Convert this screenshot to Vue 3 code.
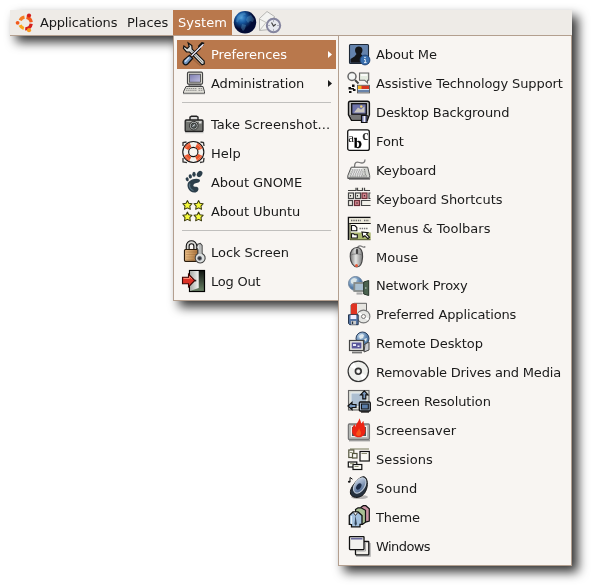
<script setup>
const icons = {
  preferences: `
    <path d="M4.5 22.8l6-6 8 7" stroke="#000" stroke-opacity=".15" stroke-width="1.5" fill="none"/>
    <path d="M6.2.9l3.6 2.6.3 3.6 12 11.8.2 3-2.2 1L7.6 10 4.500 9.800 1.400 6.300 1.900 4l3.300 2.500 2-1.900z" fill="#d9dcda" stroke="#111" stroke-width="1.200"/>
    <path d="M9 8.500l11.500 12" stroke="#8b908e" stroke-width="1"/>
    <path d="M22 2.200l-1.800-.5-2.500 2.500-.3 2L9.500 14" fill="none" stroke="#111" stroke-width="3"/>
    <path d="M21.500 2.200l-3.200 3L9.500 14" fill="none" stroke="#eef" stroke-width="1.300"/>
    <path d="M7.500 13.200l3.200 3-4.800 5.500c-3 2.600-6.400-.6-4-3.700z" fill="#7193bd" stroke="#111" stroke-width="1.200"/>
    <path d="M7 15.300l-4 4.300" stroke="#c8daef" stroke-width="1.600"/>`,
  administration: `
    <rect x="5.500" y="1.200" width="15" height="12" rx="1.200" fill="#e6e5dc" stroke="#444" stroke-width="1.200"/>
    <rect x="7.500" y="3.200" width="11" height="8" fill="url(#g-violet)" stroke="#444" stroke-width=".8"/>
    <path d="M7 13.500h12v2H7z" fill="#999" stroke="#444" stroke-width=".7"/>
    <path d="M4 15.500h17l1.500 5.200v1.600h-21v-1.600z" fill="#e0dfd8" stroke="#444" stroke-width="1"/>
    <path d="M4.500 17.500h10M4 19.300h11M16.500 17.500h4M16.500 19.300h4.500" stroke="#777" stroke-width=".8" stroke-dasharray="1.500 .6"/>
    <path d="M1 22.700h22" stroke="#888" stroke-width="1"/>`,
  camera: `
    <path d="M8 8V5.200l1.500-1h5l1.500 1V8" fill="#ddd" stroke="#222" stroke-width="1.400"/>
    <rect x="3.200" y="8" width="17.800" height="11.500" rx="1" fill="#737571" stroke="#222" stroke-width="1.300"/>
    <path d="M4.500 9.400h15.300" stroke="#b9bab6" stroke-width="1"/>
    <rect x="17" y="9.500" width="2.500" height="2" fill="#ddd"/>
    <circle cx="11.800" cy="13.700" r="4.300" fill="#b4bab8" stroke="#333"/>
    <circle cx="11.800" cy="13.700" r="2.600" fill="#59625f" stroke="#222" stroke-width=".8"/>
    <path d="M10.500 14.500l2.500-2" stroke="#dde"/>
    <path d="M3 20.700h18.500" stroke="#bbb"/>`,
  help: `
    <path d="M1 5V1.500L4.500 1M18.500 1l3 .5.500 3.500M1 17v4l4 .7M18 21.500l3.500-.7.500-4" fill="none" stroke="#333" stroke-width="1.300"/>
    <circle cx="11.300" cy="11" r="7.600" fill="none" stroke="#111" stroke-width="7"/>
    <circle cx="11.300" cy="11" r="7.600" fill="none" stroke="#f2f2ee" stroke-width="4.800"/>
    <circle cx="11.300" cy="11" r="7.600" fill="none" stroke="#e8552c" stroke-width="4.800" stroke-dasharray="5.969 5.969" stroke-dashoffset="-2.984"/>
    <circle cx="11.300" cy="11" r="8.600" fill="none" stroke="#fff" stroke-opacity=".3" stroke-width="1"/>`,
  gnome: `
    <g fill="#2c3f4b">
      <ellipse cx="5.200" cy="9.300" rx="1.500" ry="2" transform="rotate(-20 5.200 9.300)"/>
      <ellipse cx="8.300" cy="6.400" rx="1.600" ry="2.200" transform="rotate(-10 8.300 6.400)"/>
      <ellipse cx="12" cy="4.300" rx="1.700" ry="2.500"/>
      <ellipse cx="17.600" cy="4" rx="2.500" ry="3.300" transform="rotate(35 17.600 4)"/>
      <path d="M17.500 9.400c-2.600-1.600-8.500-.5-11 2.600-2.800 4 .6 10.600 5.800 10.600 3.600 0 4.800-3 3.800-4.800-.9-1.500-2.900-.6-4.100-1.300-1.400-.9-.3-3 1.600-3.300 2.700-.4 5.500-1.500 3.900-3.800z"/>
    </g>
    <path d="M8 13.500c-1.500 2.500.5 6.500 3.500 7" fill="none" stroke="#587383" stroke-width="1.200"/>`,
  ubuntuStars: [[5.4, 5.900], [16.600, 5.900], [5.400, 17.400], [16.600, 17.400]].map(([x, y]) =>
    `<path transform="translate(${x} ${y}) scale(.92)" d="M0-4.700l1.500 2.900 3.500.5L2.600 1.300l.6 3.400L0 3.200l-3.200 1.500.6-3.400L-5-1.300l3.500-.5z" fill="#f5fa3c" stroke="#3a3a10" stroke-width="1.100" stroke-linejoin="round"/>`).join(''),
  lock: `
    <path d="M5.700 10V6c0-5 7.600-5 7.600 0v4" fill="none" stroke="#111" stroke-width="4"/>
    <path d="M5.700 10V6c0-5 7.600-5 7.600 0v4" fill="none" stroke="#d8d8d4" stroke-width="1.800"/>
    <rect x="2.500" y="9.500" width="13.500" height="11.800" rx="1" fill="url(#g-brass)" stroke="#2a1c0c" stroke-width="1.200"/>
    <path d="M4 12h11M4 14.500h10M4 17h8M4 19.300h8" stroke="#7c4f1e" stroke-opacity=".35" stroke-width=".8"/>
    <path d="M16 13.500V10l-1.500-2.800 1.300-3 2.500-.8 1.800 2v8a5 5 0 1 1-4.100.1z" fill="#dce0df" stroke="#444" stroke-width="1.100"/>
    <path d="M18 5v9" stroke="#888" stroke-width=".8"/>
    <circle cx="17.600" cy="18.300" r="2" fill="#303638" stroke="#778" stroke-width=".8"/>`,
  logout: `
    <rect x="7.500" y="1.500" width="15" height="21" fill="url(#g-night)" stroke="#000" stroke-width="1.200"/>
    <path d="M8 2h8.700v17L8 22z" fill="url(#g-door)"/>
    <path d="M13.500 10.800v1.600" stroke="#222" stroke-width="1.500"/>
    <path d="M.5 8.300h6V5l6.300 6.500L6.500 18v-3.200h-6z" fill="#dc3226" stroke="#3d0705" stroke-width="1.100"/>
    <path d="M1.500 9.500h6v-2l2.500 2.800" stroke="#ff8a73" fill="none"/>`,
  aboutMe: `
    <rect x="2.500" y="2.500" width="19" height="19" rx="1" fill="#6483ad" stroke="#1d2836" stroke-width="1.100"/>
    <path d="M3.500 20.700V17l4-2.500 2-2.500c-2.500-3-1.700-7.500 2.300-7.500s4.800 4.500 2.200 7.500l2 2.500 4.500 2.500v3.700z" fill="#141517"/>
    <circle cx="18" cy="18" r="4.900" fill="#3a6fae" stroke="#1d4070" stroke-width=".9"/>
    <path d="M17 17.500h1.300v3M17 20.600h2.600" stroke="#dce8f4" stroke-width="1" fill="none"/><circle cx="18" cy="15.500" r=".8" fill="#dce8f4"/>`,
  assistive: `
    <path d="M8 9l3.500 3.500" stroke="#444" stroke-width="2"/>
    <circle cx="5" cy="5.500" r="4" fill="#f4f6f4" stroke="#666" stroke-width="1.500"/>
    <path d="M12.500 2h9.200v7.200h-1.200V12l-2.800-2.800h-5.200V2z" fill="#e4ece0" stroke="#666" stroke-width="1.100"/>
    <path d="M14 4h6" stroke="#fff" stroke-width="1.600"/>
    <path d="M5 13.500h2.500V16H5zM1.500 16H4v2.500H1.500zM6 18h2.500v2H6zM2 20h2.500v2H2zM4 17h3v1.500H4z" fill="#111"/>
    <rect x="10.500" y="14.300" width="12" height="7.600" fill="#dce3ec" stroke="#555" stroke-width=".9"/>
    <path d="M14 14.800h8v3.200h-8z" fill="#d93620"/><path d="M11 14.800h3.500v3.200H11z" fill="#f0b023"/>
    <path d="M11 20h11" stroke="#2b4f86" stroke-width="1.300"/>`,
  background: `
    <path d="M3.200 1.200h17.200c1.200 0 2 .8 2 2v11.500l-2 5.500H4.500l-3-5.500V3.200c0-1.200.7-2 1.700-2z" fill="#bbb" stroke="#111" stroke-width="1.400"/>
    <path d="M2.500 15h19l-1.700 4.300H5z" fill="#777"/>
    <rect x="4.700" y="3.700" width="14.600" height="10.500" fill="#6e73aa" stroke="#111" stroke-width="1.300"/>
    <path d="M7 12.500l4-5 3 2 3.500-3v6z" fill="#c9c5bd"/><circle cx="14.300" cy="6.500" r="1.200" fill="#eed26f"/>
    <path d="M14.500 15.500h5.500v7h-5.500z" fill="#8085b5" stroke="#111" stroke-width="1.200"/><path d="M17.300 16v6" stroke="#eee" stroke-width="1.500"/>`,
  font: `
    <rect x=".7" y=".8" width="21.600" height="20.600" rx="2" fill="#fff" stroke="#111" stroke-width="1.300"/>
    <text x="1.200" y="12.500" font-family="Liberation Serif, serif" font-size="13" fill="#111">a</text>
    <text x="7.100" y="19" font-family="Liberation Serif, serif" font-weight="bold" font-size="14" fill="#000" stroke="#000" stroke-width=".4">b</text>
    <text x="15.200" y="10.500" font-family="Liberation Serif, serif" font-weight="bold" font-size="14" fill="#333">c</text>`,
  keyboard: `
    <path d="M7.500 9c0-5 2-5.500 5-4.500 4 1.500 5.500-.5 5.500-3" fill="none" stroke="#777" stroke-width="1.300"/>
    <path d="M4.200 9.200h16.500l2 8.500v2.800H.8v-2.800z" fill="#d4d6d1" stroke="#555" stroke-width="1"/>
    <path d="M5 11h10.500M4.500 13h11M4 15h12M3.300 17h12" stroke="#fff" stroke-width="1.400"/>
    <path d="M5 12h11M4.300 14h12M3.500 16h13M3 18h17M17.500 11l1 6.500" stroke="#666" stroke-width=".9" stroke-dasharray="1.500 .7"/>
    <path d="M1 19.500h22M2 21.400h21" stroke="#888" stroke-width="1"/>`,
  shortcuts: `
    <g fill="#f0efe8" stroke="#444" stroke-width="1.200">
      <path d="M1 3.500h8V.7M10.500.7v2.800h5V.7M17.500.7v2.800h5.500"/>
      <rect x="1.500" y="6" width="5" height="5.500"/><rect x="8.500" y="6" width="5" height="5.500"/>
      <rect x="15" y="6" width="5" height="5.500" fill="#d5868f" stroke="#6c2f38"/><path d="M23.500 6h-1.500v5.500h1.500"/>
      <rect x="1.500" y="13.500" width="4" height="5"/><rect x="7.500" y="13.500" width="5" height="5" fill="#d5868f" stroke="#6c2f38"/>
      <path d="M23.500 13.500h-9v5h9"/>
    </g>
    <path d="M10.500 8v1.500M3.500 8v1.500M17.500 8v1.500M10 15.200v1.500" stroke="#333" stroke-width="1.200"/>`,
  menus: `
    <path d="M1.500 24V1.500h22" fill="none" stroke="#111" stroke-width="1.500"/>
    <path d="M2.200 2.200h21.500v5H2.200z" fill="#eceadb"/><path d="M4 4.500h10M17 4.500h5" stroke="#666" stroke-width="1.500" stroke-dasharray="1.400 .9"/>
    <path d="M2.200 7.500h21.500" stroke="#111"/>
    <path d="M3 8h20.700v8.500H3z" fill="#fbfbf5"/><path d="M3 16.500h20.700v7H3z" fill="#a9b66d"/>
    <path d="M4.500 9.500h3.300l2 2v3.300H4.500zM4.500 22v-4.300h2l1 1h2.800V22z" fill="#fff" stroke="#111" stroke-width="1.100"/>
    <path d="M12.500 12.500h8" stroke="#777" stroke-width="1.600" stroke-dasharray="1.400 .8"/>
    <path d="M15 16l6 .7-1.500 1.500 3 3-1.600 1.500-3-3L16 21z" fill="#fff" stroke="#111" stroke-width="1.100"/>
    <path d="M3 8v15.700h20.500" fill="none" stroke="#4b5326"/>`,
  mouse: `
    <path d="M10.500 3c0-2 2.500-2.500 4-1.700s2.500 1.600 3.800.2" fill="none" stroke="#777" stroke-width="1.200"/>
    <path d="M10 2.500c4 0 6 4 5.600 9.500-.4 6-2.600 10-5.600 10-3.500 0-6.700-4.500-6.800-10.500C3.100 6 6 2.500 10 2.500z" fill="url(#g-mouse)" stroke="#444" stroke-width="1.100"/>
    <path d="M4 10c3-1.500 8-1.500 11 0M10 3v6" fill="none" stroke="#777" stroke-width=".8"/><rect x="8.800" y="4" width="2.400" height="5" rx="1" fill="#444"/>
    <circle cx="9.500" cy="20.500" r="1.500" fill="#e65a3a"/>`,
  network: `
    <circle cx="8.500" cy="9.500" r="7" fill="url(#g-sky)" stroke="#6c8199" stroke-width=".9"/>
    <path d="M4 6l3-2 3 1-1 3-3 2-2-1zM10 9l4-1v4z" fill="#dbe6e8"/>
    <rect x="7.300" y="9" width="10" height="8" fill="#a8bfd0" stroke="#858b89" stroke-width="1.800"/>
    <path d="M9.500 19.500h6" stroke="#aaa" stroke-width="2.200"/>
    <path d="M16.700 8l5-1.500v15l-5-1.500z" fill="#4c6450" stroke="#26362a"/><path d="M18 14h1.500" stroke="#cdd"/>`,
  preferred: `
    <path d="M4 3l3-1.700h12.500V17H4z" fill="#e6e5e0" stroke="#666"/><path d="M4 3l1-1.500h5V13H4z" fill="#df3423"/>
    <circle cx="16.500" cy="14.500" r="6.400" fill="#e5e6e3" stroke="#777" stroke-width="1.100"/>
    <path d="M16.500 14.500l-5-3.500M16.500 14.500l5 3" stroke="#fff" stroke-width="2"/>
    <circle cx="16.500" cy="14.500" r="2" fill="#f8f5f2" stroke="#777"/>
    <path d="M1.500 12.800h9.700v9.900H2.800l-1.300-1.200z" fill="#5675a3" stroke="#26364e"/>
    <path d="M3.500 13h5.800v4H3.500z" fill="#eef"/><path d="M4 19h5v3.500H4z" fill="#ccc"/><path d="M5.500 19.500v2.500" stroke="#234" stroke-width="1.300"/>`,
  remote: `
    <circle cx="15.500" cy="7.500" r="6.500" fill="url(#g-sky)" stroke="#283e5e"/>
    <path d="M12 5l3-2 2 1-1 3-3 1zM17 8l3-1-1 4z" fill="#dfe9ed"/>
    <path d="M18 13l4-2v8l-5 2z" fill="#c9cbd0" stroke="#444"/>
    <rect x="2.500" y="9.500" width="14" height="10" fill="#e9e8e4" stroke="#444" stroke-width="1.200"/>
    <rect x="4.700" y="11.500" width="9.700" height="6" fill="#59559a"/><path d="M6 13h3v2H6zM10.500 14.500h2v1.500h-2z" fill="#e8e8f5"/>
    <path d="M5 21.500h10" stroke="#777" stroke-width="1.800"/>`,
  disc: `
    <circle cx="11.600" cy="12" r="10.600" fill="#aaa" opacity=".5"/>
    <circle cx="11.300" cy="11.300" r="10.200" fill="#eeefec" stroke="#333" stroke-width="1.200"/>
    <path d="M11.300 11.300L3 6.500a9.500 9.500 0 0 1 4-4zM11.300 11.300l8.300 4.800a9.500 9.500 0 0 1-4 4z" fill="#fff"/>
    <circle cx="11.300" cy="11.300" r="2.900" fill="#e1e1df" stroke="#333" stroke-width="1.600"/><circle cx="11.300" cy="11.300" r="1.100" fill="#fff"/>`,
  resolution: `
    <rect x="1.500" y="1.500" width="20.500" height="19.500" fill="#d8dbd5" stroke="#666" stroke-width="1.100"/>
    <rect x="4" y="4" width="15.500" height="13.500" fill="#adbfd1" stroke="#e9eff2"/>
    <path d="M17.300 1.800l3.700 4h-2.200v4h-3v-4h-2.200z" fill="#7b9bc1" stroke="#111" stroke-width="1.200"/>
    <path d="M1 17l4-3.700v2.200h4v3H5v2.200z" fill="#7b9bc1" stroke="#111" stroke-width="1.200"/>
    <rect x="12.300" y="13" width="11" height="9" rx="1" fill="#9bb0c9" stroke="#111" stroke-width="1.300"/>
    <rect x="14.500" y="15" width="6.800" height="5" fill="#597da9" stroke="#111"/><path d="M14 23h8" stroke="#111" stroke-width="1.300"/>`,
  screensaver: `
    <rect x="1.400" y="6" width="21" height="15.500" rx="1" fill="#b8bbb8" stroke="#777" stroke-width="1.300"/>
    <rect x="4.500" y="8.500" width="15" height="10" fill="#4e5554" stroke="#eee"/>
    <path d="M2 22.700h21" stroke="#999" stroke-width="1.300"/>
    <path d="M12 .2c2 2 1.200 3.800 2.800 5.500.2-1 .7-2.200 1.700-2.700-.2 3 2.300 6 2 10-.3 4-3.300 6.300-6.700 6.300-4 0-6.900-2.700-6.700-6.600.1-2.500.7-4.900 2.700-6.400 0 1.500.3 2 1 2.500C8.500 5.500 12.500 3.500 12 .2z" fill="#ec2414"/>
    <path d="M12 10c.5 2.500 2.300 3.300 2 5.500-.2 1.700-1.200 2.500-2.500 2.500-1.600 0-2.500-1-2.300-2.500.3-2 2.600-3 2.800-5.500z" fill="#f9551a"/>`,
  sessions: `
    <path d="M3 2h19" stroke="#8b8d72" stroke-width="1.200"/>
    <g fill="#fafaf4" stroke="#53543d" stroke-width="1.200">
      <rect x="1.800" y="3" width="5" height="7.500"/><rect x="5.500" y="6.500" width="4.500" height="4.500"/>
      <rect x="13" y="4.500" width="9.300" height="9.500" stroke="#111"/>
      <rect x="1.300" y="15" width="8.500" height="5" stroke="#111"/><rect x="6" y="17.500" width="8.800" height="5" stroke="#111"/>
    </g><path d="M2.500 5.500h3M14.500 6.500h5.500M7.500 19.500h4M3 16.700h4" stroke="#8b8d72"/>`,
  sound: `
    <ellipse cx="2.200" cy="5.800" rx="1.300" ry="1" fill="#111"/><path d="M3 5.800V1.500l2.500 1.700" fill="none" stroke="#111" stroke-width="1"/>
    <ellipse cx="12.500" cy="21" rx="8.500" ry="2" fill="#777" opacity=".5"/>
    <path d="M17 .8c3.800.8 4.500 9 1.500 14.700-2.500 5-7.500 6.800-11.500 5.500-4.500-1.500-4.500-6-1.700-10.500C8.500 5.500 13.500.2 17 .8z" fill="#26313e" stroke="#111"/>
    <ellipse cx="12.700" cy="9.500" rx="5" ry="8.500" transform="rotate(33 12.700 9.500)" fill="url(#g-cone)" stroke="#c3cedb" stroke-width="1.100"/>
    <ellipse cx="11.800" cy="10.500" rx="2.200" ry="3.600" transform="rotate(33 11.800 10.500)" fill="#1d2d49"/>`,
  theme: `
    <path d="M14 2.200l2.300-1.500h2.500l3.500 3V16l-3 .8-5-1z" fill="#cb94a4" stroke="#111" stroke-width="1.200"/>
    <path d="M8.500 4.500l2.500-1.700h3l4.500 2.500v12l-3 2-6-1z" fill="#a8bf94" stroke="#111" stroke-width="1.200"/>
    <path d="M2.300 10.500L6 7h5l4 3.500v8.800h-2v2.500H4.500v-2.500H2.300z" fill="#a3c1df" stroke="#111" stroke-width="1.300"/>
    <path d="M6.300 7.500l2.200 3 2.200-3" fill="#fff" stroke="#333"/><path d="M8.500 10.500l-1 8.500 1.200 2 1.200-2z" fill="#34465b"/>
    <path d="M4.500 11v8" stroke="#e3eff9" stroke-width="1.300"/>`,
  windows: `
    <path d="M9 22h14V9" stroke="#aaa" fill="none" stroke-width="1.400"/>
    <rect x="8.500" y="7.500" width="13.300" height="13.300" rx=".5" fill="#f1efea" stroke="#111" stroke-width="1.300"/>
    <path d="M9.500 17h9V9" stroke="#aaa" fill="none"/>
    <rect x="2.500" y="2.600" width="14.500" height="13" rx=".5" fill="#f1f1ee" stroke="#111" stroke-width="1.300"/>
    <path d="M4 4.700h11.500" stroke="#6b6a9d" stroke-width="1.700"/>`,
}

// trim: how many pixels the label's natural width is tightened by
const systemGroups = [
  [
    { label: 'Preferences', icon: 'preferences', submenu: true, active: true, trim: 0.5 },
    { label: 'Administration', icon: 'administration', submenu: true, trim: 2 },
  ],
  [
    { label: 'Take Screenshot...', icon: 'camera', trim: -1 },
    { label: 'Help', icon: 'help' },
    { label: 'About GNOME', icon: 'gnome', trim: 1 },
    { label: 'About Ubuntu', icon: 'ubuntuStars', trim: 1 },
  ],
  [
    { label: 'Lock Screen', icon: 'lock', trim: 0.5 },
    { label: 'Log Out', icon: 'logout', trim: 1.5 },
  ],
]

const preferences = [
  { label: 'About Me', icon: 'aboutMe', trim: 1 },
  { label: 'Assistive Technology Support', icon: 'assistive', trim: 3 },
  { label: 'Desktop Background', icon: 'background', trim: 2 },
  { label: 'Font', icon: 'font', trim: 0.5 },
  { label: 'Keyboard', icon: 'keyboard', trim: 1 },
  { label: 'Keyboard Shortcuts', icon: 'shortcuts', trim: 1 },
  { label: 'Menus & Toolbars', icon: 'menus' },
  { label: 'Mouse', icon: 'mouse' },
  { label: 'Network Proxy', icon: 'network', compact: true, trim: 2.5 },
  { label: 'Preferred Applications', icon: 'preferred', trim: 3 },
  { label: 'Remote Desktop', icon: 'remote', trim: 1 },
  { label: 'Removable Drives and Media', icon: 'disc', trim: 5 },
  { label: 'Screen Resolution', icon: 'resolution', trim: 2 },
  { label: 'Screensaver', icon: 'screensaver', trim: 0.5 },
  { label: 'Sessions', icon: 'sessions', trim: -0.5 },
  { label: 'Sound', icon: 'sound', trim: -0.5 },
  { label: 'Theme', icon: 'theme', trim: 1 },
  { label: 'Windows', icon: 'windows', trim: 4 },
]

const tracking = ({ label, trim = 0 }) => ({ letterSpacing: `${-trim / label.length}px` })
</script>

<template>
  <div class="desktop">
    <svg class="defs" width="0" height="0">
      <defs>
        <linearGradient id="g-violet" x2="1" y2="1"><stop stop-color="#7c7cb0" /><stop offset="1" stop-color="#c0bfe0" /></linearGradient>
        <linearGradient id="g-brass"><stop stop-color="#f0c48c" /><stop offset="1" stop-color="#a8703a" /></linearGradient>
        <linearGradient id="g-night" x2="0" y2="1"><stop stop-color="#101411" /><stop offset="1" stop-color="#6c8568" /></linearGradient>
        <linearGradient id="g-door"><stop stop-color="#a5aaa5" /><stop offset="1" stop-color="#f3f5f2" /></linearGradient>
        <linearGradient id="g-mouse"><stop stop-color="#777" /><stop offset=".45" stop-color="#e4e5e3" /><stop offset="1" stop-color="#777" /></linearGradient>
        <radialGradient id="g-sky" cx=".35" cy=".3"><stop stop-color="#c9def0" /><stop offset="1" stop-color="#527ba8" /></radialGradient>
        <linearGradient id="g-cone" x2="1" y2="1"><stop stop-color="#d3deee" /><stop offset="1" stop-color="#36537f" /></linearGradient>
        <radialGradient id="g-earth" cx=".35" cy=".3"><stop stop-color="#4d9bd8" /><stop offset=".45" stop-color="#17589f" /><stop offset="1" stop-color="#020b35" /></radialGradient>
      </defs>
    </svg>

    <header class="panel">
      <button class="entry apps">
        <svg class="logo" viewBox="0 0 20 20">
          <g fill="none" stroke-width="3.300">
            <path d="M5.200 7.400A5.800 5.800 0 0 1 9.500 4.200" stroke="#f47b20" />
            <path d="M11.500 4.300a5.800 5.800 0 0 1 4.700 5" stroke="#f2591b" />
            <path d="M16.200 10.800a5.800 5.800 0 0 1-6 5" stroke="#d6201c" />
            <path d="M8.800 15.500a5.800 5.800 0 0 1-3.700-3.300" stroke="#f8a51b" />
          </g>
          <circle cx="2.600" cy="9.800" r="1.900" fill="#f2591b" />
          <circle cx="14" cy="2.500" r="2.100" fill="#d6201c" />
          <circle cx="14" cy="17.200" r="2.100" fill="#f8981d" />
        </svg>
        <span class="apps-label">Applications</span>
      </button>
      <button class="entry places">Places</button>
      <button class="entry system">System</button>
      <svg class="launcher" viewBox="0 0 24 24">
        <circle cx="12" cy="12.300" r="11.200" fill="url(#g-earth)" />
        <path d="M4 7c2-3 5-4.500 8-4.500l1 2-3 1-1 3-3 1-1 3-2-1zM14 7l4-2 3 4-1 3-3-1-2 2-2-3zM9 14l4 1-1 4-2 2-2-3z" fill="#6db4de" opacity=".32" />
      </svg>
      <svg class="launcher mail" viewBox="0 0 24 24">
        <path d="M1.500 8.500L9 1.500l7.500 5V19l-15 1.500z" fill="#f3f3f1" stroke="#b5b5b2" />
        <path d="M1.500 9l7.500 4 7.500-6M2 20l6-7.500" fill="none" stroke="#c2c2be" />
        <circle cx="15.500" cy="15.500" r="6.700" fill="#e6e8ee" stroke="#85859f" stroke-width="2" />
        <path d="M13.500 12.500l2 3.500 2.300-1.800" fill="none" stroke="#444" stroke-width="1.200" />
        <path d="M15.500 10.500v1M15.500 19.500v1M10.500 15.500h1M19.500 15.500h1" stroke="#778" />
      </svg>
    </header>

    <nav class="menu system-menu">
      <template v-for="(group, g) in systemGroups" :key="g">
        <div v-if="g" class="separator"></div>
        <div v-for="item in group" :key="item.label" class="row" :class="{ active: item.active }">
          <svg class="icon" viewBox="0 0 24 24" v-html="icons[item.icon]"></svg>
          <span class="label" :style="tracking(item)">{{ item.label }}</span>
          <svg v-if="item.submenu" class="arrow" viewBox="0 0 4 7"><path d="M0 0l4 3.500L0 7z" fill="currentColor" /></svg>
        </div>
      </template>
    </nav>

    <nav class="menu preferences-menu">
      <div v-for="item in preferences" :key="item.label" class="row" :class="{ compact: item.compact }">
        <svg class="icon" viewBox="0 0 24 24" v-html="icons[item.icon]"></svg>
        <span class="label" :style="tracking(item)">{{ item.label }}</span>
      </div>
    </nav>
  </div>
</template>

<style>
body {
  background: #fff;
}
</style>

<style scoped>
.desktop {
  position: relative;
  box-sizing: border-box;
  width: 592px;
  height: 586px;
  padding: 10px 20px 0 10px;
  overflow: hidden;
  font: 13px/16px "DejaVu Sans", sans-serif;
  color: #1a1a1a;
  filter: drop-shadow(6px 6px 5.5px rgba(0, 0, 0, 0.8));
}
.defs {
  position: absolute;
}
.panel {
  display: flex;
  box-sizing: border-box;
  height: 26px;
  background: #eeebe7;
  border-bottom: 1px solid #b39f8f;
}
.entry {
  display: flex;
  align-items: center;
  height: 25px;
  padding: 0 5px;
  border: 0;
  background: none;
  font: inherit;
  color: inherit;
  white-space: nowrap;
}
.apps {
  width: 112px;
  gap: 5px;
}
.apps-label {
  letter-spacing: -0.18px;
}
.logo {
  flex: none;
  width: 20px;
  height: 20px;
}
.places {
  width: 51px;
}
.system {
  width: 59px;
  background: #b9784c;
  color: #fff;
  letter-spacing: 0.1px;
}
.launcher {
  width: 24px;
  height: 24px;
  margin-left: 1px;
}
.menu {
  position: absolute;
  box-sizing: border-box;
  top: 35px;
  padding: 4px 3px;
  background: #f8f5f2;
  border: 1px solid #b39f8f;
}
.system-menu {
  left: 173px;
  width: 167px;
  height: 266px;
}
.preferences-menu {
  left: 338px;
  width: 234px;
  height: 531px;
}
.row {
  display: flex;
  box-sizing: border-box;
  height: 29px;
  padding: 2px 4px 0 5px;
  gap: 5px;
  white-space: nowrap;
}
.active {
  width: 159px;
  background: #b9784c;
  color: #fff;
}
.icon {
  flex: none;
  width: 24px;
  height: 24px;
  overflow: visible;
}
.label {
  flex: 1;
  padding-top: 5px;
}
.compact {
  height: 28px;
}
.compact .label {
  padding-top: 4px;
}
.arrow {
  width: 4px;
  height: 7px;
  margin-top: 9px;
}
.separator {
  height: 1px;
  margin: 4px 5px 7px 5px;
  background: #c0bfbd;
}
</style>
